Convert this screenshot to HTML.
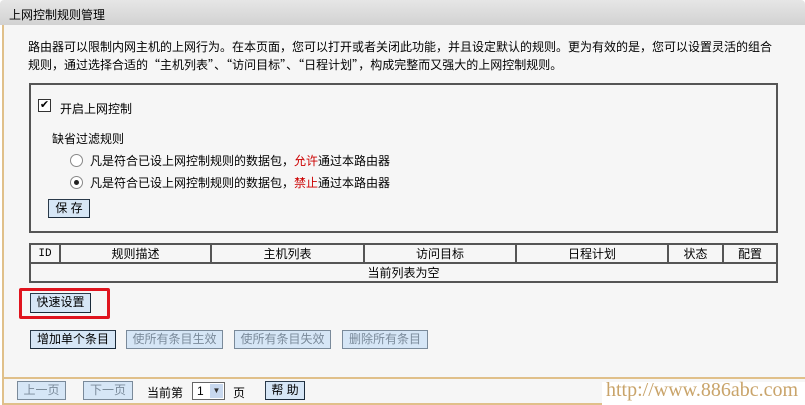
<!DOCTYPE html><html><head><meta charset="utf-8"><style>
body{margin:0;width:805px;height:405px;position:relative;background:#fff;font:12px "Liberation Sans","Noto Sans CJK SC","WenQuanYi Zen Hei",sans-serif;color:#000;overflow:hidden}
.a{position:absolute;white-space:nowrap}
.q{font-family:"Noto Sans CJK SC",sans-serif}
.btn{position:absolute;background:#d6e6f6;border:1px solid #2a3a4a;border-right-color:#1a2a3a;border-bottom-color:#1a2a3a;box-sizing:border-box;text-align:center;line-height:17px;font-size:12px}
.dis{color:#7a8a9a;border-color:#7a8a9a}
table{border-collapse:collapse;position:absolute;left:29px;top:243px;width:749px;background:#f6f6f6;table-layout:fixed}
td{border:2px solid #555;height:16px;text-align:center;padding:0;font-size:12px}
</style></head><body>
<div class="a" style="left:0;top:0;width:805px;height:25px;background:linear-gradient(#e6e6e6,#d2d2d2);border-radius:4px 4px 0 0"></div>
<div class="a" style="left:9px;top:6px">上网控制规则管理</div>
<div class="a" style="left:2px;top:25px;width:801px;height:352px;background:#f6f6f6;border-left:2px solid #e0c08a;border-bottom:2px solid #e0c08a"></div>
<div class="a" style="left:28px;top:38px">路由器可以限制内网主机的上网行为。在本页面，您可以打开或者关闭此功能，并且设定默认的规则。更为有效的是，您可以设置灵活的组合</div>
<div class="a" style="left:28px;top:56px">规则，通过选择合适的<span class="q">“</span>主机列表<span class="q">”</span>、<span class="q">“</span>访问目标<span class="q">”</span>、<span class="q">“</span>日程计划<span class="q">”</span>，构成完整而又强大的上网控制规则。</div>
<div class="a" style="left:29px;top:83px;width:745px;height:146px;border:2px solid #555"></div>
<div class="a" style="left:38px;top:99px;width:11px;height:11px;border:1px solid #333;background:#fff;font-size:11px;line-height:11px;text-align:center">✔</div>
<div class="a" style="left:60px;top:100px">开启上网控制</div>
<div class="a" style="left:52px;top:130px">缺省过滤规则</div>
<div class="a" style="left:70px;top:154px;width:11px;height:11px;border:1px solid #888;border-radius:50%;background:#fff"></div>
<div class="a" style="left:90px;top:152px">凡是符合已设上网控制规则的数据包，<span style="color:#c00">允许</span>通过本路由器</div>
<div class="a" style="left:70px;top:176px;width:11px;height:11px;border:1px solid #888;border-radius:50%;background:#fff"><div style="margin:3px;width:5px;height:5px;border-radius:50%;background:#222"></div></div>
<div class="a" style="left:90px;top:174px">凡是符合已设上网控制规则的数据包，<span style="color:#c00">禁止</span>通过本路由器</div>
<div class="btn" style="left:48px;top:199px;width:42px;height:19px">保 存</div>
<table><colgroup><col style="width:30px"><col style="width:151px"><col style="width:153px"><col style="width:152px"><col style="width:152px"><col style="width:55px"><col></colgroup>
<tr><td style="font-family:'Liberation Mono',monospace;font-size:11px">ID</td><td>规则描述</td><td>主机列表</td><td>访问目标</td><td>日程计划</td><td>状态</td><td>配置</td></tr>
<tr><td colspan="7">当前列表为空</td></tr></table>
<div class="a" style="left:19px;top:288px;width:85px;height:25px;border:3px solid #e0141e;border-radius:2px"></div>
<div class="btn" style="left:30px;top:293px;width:61px;height:20px">快速设置</div>
<div class="btn" style="left:30px;top:330px;width:86px;height:19px">增加单个条目</div>
<div class="btn dis" style="left:126px;top:330px;width:97px;height:19px">使所有条目生效</div>
<div class="btn dis" style="left:234px;top:330px;width:97px;height:19px">使所有条目失效</div>
<div class="btn dis" style="left:342px;top:330px;width:86px;height:19px">删除所有条目</div>
<div class="a" style="left:2px;top:379px;width:801px;height:24px;background:#f6f6f6;border-left:2px solid #e0c08a;border-bottom:2px solid #e0c08a"></div>
<div class="btn dis" style="left:17px;top:381px;width:49px;height:19px">上一页</div>
<div class="btn dis" style="left:83px;top:381px;width:50px;height:19px">下一页</div>
<div class="a" style="left:147px;top:384px">当前第</div>
<div class="a" style="left:192px;top:382px;width:31px;height:16px;border:1px solid #666;background:#fff"><span style="position:absolute;left:4px;top:1px">1</span><div style="position:absolute;right:1px;top:1px;width:13px;height:14px;background:#c8d8ee;font-size:8px;line-height:14px;text-align:center;color:#333">▼</div></div>
<div class="a" style="left:233px;top:384px">页</div>
<div class="btn" style="left:265px;top:381px;width:40px;height:19px">帮 助</div>
<div class="a" style="left:602px;top:382px;width:203px;height:23px;background:#fff"></div>
<div class="a" style="left:606px;top:379px;font:20px 'Liberation Serif',serif;color:#c9a46a">http://www.886abc.com</div>
</body></html>
